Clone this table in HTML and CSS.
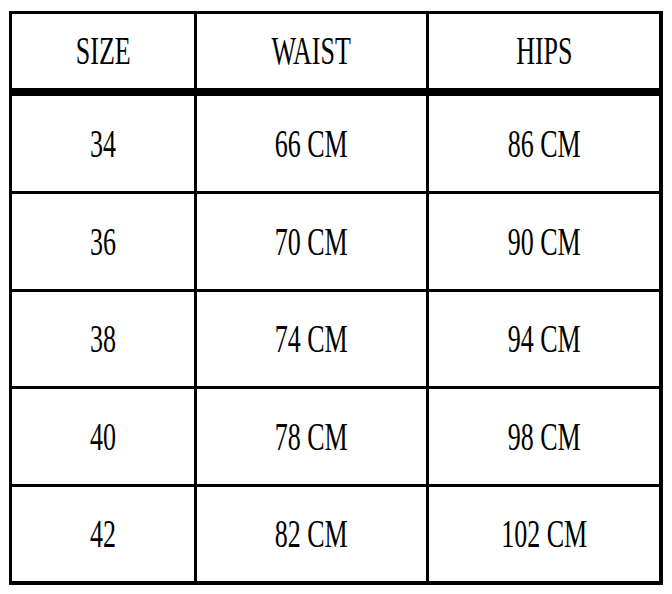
FILE: index.html
```html
<!DOCTYPE html>
<html lang="en">
<head>
<meta charset="utf-8">
<title>Size chart</title>
<link rel="stylesheet" href="styles.css">
</head>
<body>
<div class="chart">
  <div class="row head">
    <div class="cell c1"><span class="t">SIZE</span></div>
    <div class="cell c2"><span class="t">WAIST</span></div>
    <div class="cell c3"><span class="t">HIPS</span></div>
  </div>
  <div class="row body first">
    <div class="cell c1"><span class="t">34</span></div>
    <div class="cell c2"><span class="t">66 CM</span></div>
    <div class="cell c3"><span class="t">86 CM</span></div>
  </div>
  <div class="row body">
    <div class="cell c1"><span class="t">36</span></div>
    <div class="cell c2"><span class="t">70 CM</span></div>
    <div class="cell c3"><span class="t">90 CM</span></div>
  </div>
  <div class="row body short">
    <div class="cell c1"><span class="t">38</span></div>
    <div class="cell c2"><span class="t">74 CM</span></div>
    <div class="cell c3"><span class="t">94 CM</span></div>
  </div>
  <div class="row body">
    <div class="cell c1"><span class="t">40</span></div>
    <div class="cell c2"><span class="t">78 CM</span></div>
    <div class="cell c3"><span class="t">98 CM</span></div>
  </div>
  <div class="row body short">
    <div class="cell c1"><span class="t">42</span></div>
    <div class="cell c2"><span class="t">82 CM</span></div>
    <div class="cell c3"><span class="t">102 CM</span></div>
  </div>
</div>
</body>
</html>
```

FILE: styles.css
```css
html, body {
  margin: 0;
  padding: 0;
  background: #fff;
}
body {
  padding: 11px 0 0 9px;
  font-family: "Liberation Serif", "Times New Roman", serif;
  color: #000;
}
.chart {
  width: 654px;
  box-sizing: border-box;
  border-style: solid;
  border-color: #000;
  border-width: 3px 4px 4px 3px;
}
.row {
  display: flex;
}
.head {
  height: 74px;
}
.body {
  height: 95px;
  border-top: 3px solid #000;
}
.body.first {
  border-top-width: 8px;
}
.body.short {
  height: 94px;
}
.cell {
  display: flex;
  align-items: center;
  justify-content: center;
  box-sizing: border-box;
}
.cell + .cell {
  border-left: 3px solid #000;
}
.c1 { width: 182px; }
.c2 { width: 232px; }
.c3 { width: 233px; }
.t {
  display: inline-block;
  font-size: 40px;
  line-height: 1;
  white-space: nowrap;
  transform: scaleX(0.65);
}
```
